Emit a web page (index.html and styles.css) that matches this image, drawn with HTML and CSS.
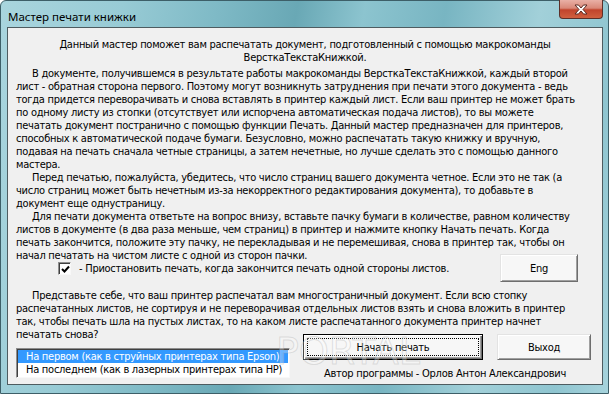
FILE: index.html
```html
<!DOCTYPE html>
<html lang="ru">
<head>
	<meta charset="UTF-8">
	<title>Мастер печати книжки</title>
	<link rel="stylesheet" href="styles.css">
</head>
<body>
	<div class="window">
		<div class="titlebar">
			<span class="title">Мастер печати книжки</span>
			<div class="close_btn">
				<svg width="16" height="11" viewBox="0 0 16 11">
					<path d="M2 1h3.5L8 4l2.5-3H14l-4 4.5L14 10h-3.5L8 7l-2.5 3H2l4-4.5z" fill="#fff" stroke="#5a2a22" stroke-width="1" stroke-linejoin="round"/>
				</svg>
			</div>
		</div>

		<div class="client">
			<p class="intro">Данный мастер поможет вам распечатать документ, подготовленный с помощью макрокоманды<br>ВерсткаТекстаКнижкой.</p>

			<p class="text">В документе, получившемся в результате работы макрокоманды ВерсткаТекстаКнижкой, каждый второй<br>лист - обратная сторона первого. Поэтому могут возникнуть затруднения при печати этого документа - ведь<br>тогда придется переворачивать и снова вставлять в принтер каждый лист. Если ваш принтер не может брать<br>по одному листу из стопки (отсутствует или испорчена автоматическая подача листов), то вы можете<br>печатать документ постранично с помощью функции Печать. Данный мастер предназначен для принтеров,<br>способных к автоматической подаче бумаги. Безусловно, можно распечатать такую книжку и вручную,<br>подавая на печать сначала четные страницы, а затем нечетные, но лучше сделать это с помощью данного<br>мастера.</p>

			<p class="text">Перед печатью, пожалуйста, убедитесь, что число страниц вашего документа четное. Если это не так (а<br>число страниц может быть нечетным из-за некорректного редактирования документа), то добавьте в<br>документ еще однустраницу.</p>

			<p class="text">Для печати документа ответьте на вопрос внизу, вставьте пачку бумаги в количестве, равном количеству<br>листов в документе (в два раза меньше, чем страниц) в принтер и нажмите кнопку Начать печать. Когда<br>печать закончится, положите эту пачку, не перекладывая и не перемешивая, снова в принтер так, чтобы он<br>начал печатать на чистом листе с одной из сторон пачки.</p>

			<div class="check_row">
				<span class="checkbox">
					<svg width="9" height="9" viewBox="0 0 9 9">
						<path d="M1 4l2.5 2.5L8 1.5" fill="none" stroke="#000" stroke-width="2"/>
					</svg>
				</span>
				<span class="check_label">- Приостановить печать, когда закончится печать одной стороны листов.</span>
				<div class="btn btn_eng">Eng</div>
			</div>

			<p class="text question">Представьте себе, что ваш принтер распечатал вам многостраничный документ. Если всю стопку<br>распечатанных листов, не сортируя и не переворачивая отдельных листов взять и снова вложить в принтер<br>так, чтобы печать шла на пустых листах, то на каком листе распечатанного документа принтер начнет<br>печатать снова?</p>

			<div class="bottom">
				<ul class="listbox">
					<li class="selected">На первом (как в струйных принтерах типа Epson)</li>
					<li>На последнем (как в лазерных принтерах типа HP)</li>
				</ul>
				<div class="actions">
					<div class="btn_row">
						<div class="btn btn_default"><span>Начать печать</span></div>
						<div class="btn btn_exit">Выход</div>
					</div>
					<div class="author">Автор программы - Орлов Антон Александрович</div>
				</div>
			</div>

			<div class="watermark">PORTAL</div>
		</div>
	</div>
</body>
</html>
```

FILE: styles.css
```css
*{
	margin:0;
	padding:0;
}

body{
	width:609px;
	height:394px;
	overflow:hidden;
	font-family:"DejaVu Sans Condensed","DejaVu Sans",sans-serif;
	font-size:11px;
	letter-spacing:-0.26px;
	color:#000;
}

.window{
	width:609px;
	height:394px;
	box-sizing:border-box;
	border:1px solid #3d5f68;
	border-radius:6px 6px 0 0;
	background:linear-gradient(100deg,#a9d5de 0%,#98cbd5 18%,#7fbac6 32%,#69a8b5 44%,#8cc4cf 54%,#78b5c2 66%,#a2d0d9 80%,#8fc5d0 92%,#a6d3dc 100%);
}

.titlebar{
	height:26px;
	display:flex;
	justify-content:space-between;
	align-items:flex-start;
}

.title{
	font-family:"Noto Sans",sans-serif;
	font-size:11.5px;
	letter-spacing:0;
	margin:8px 0 0 7px;
	color:#000;
}

.close_btn{
	width:42px;
	height:18px;
	margin-top:-1px;
	margin-right:5px;
	border:1px solid #5c3029;
	border-top:none;
	border-radius:0 0 4px 4px;
	background:linear-gradient(#e9b0a6 0%,#d98878 45%,#c1442c 55%,#d0603f 100%);
	display:flex;
	justify-content:center;
	align-items:center;
}

.client{
	position:relative;
	height:358px;
	margin:0 5px 0 6px;
	box-sizing:border-box;
	border:1px solid #4e5c60;
	background:#f0f0f0;
	padding:10px 8px 0 8px;
	line-height:13px;
}

.intro{
	text-align:center;
	white-space:nowrap;
}

.text{
	text-indent:16px;
	white-space:nowrap;
}

.intro + .text{
	margin-top:3px;
}

.check_row{
	display:flex;
	align-items:flex-start;
	padding-left:42px;
}

.checkbox{
	width:13px;
	height:13px;
	box-sizing:border-box;
	background:#fff;
	border:1px solid;
	border-color:#8e8e8e #f8f8f8 #f8f8f8 #8e8e8e;
	box-shadow:inset 1px 1px #3f3f3f;
	display:flex;
	justify-content:center;
	align-items:center;
	padding:1px 0 0 1px;
}

.check_label{
	margin-left:8px;
	flex:1;
}

.btn{
	box-sizing:border-box;
	background:#f7f7f7;
	border:1px solid;
	border-color:#e3e3e3 #6e6e6e #6e6e6e #e3e3e3;
	box-shadow:inset 1px 1px #fff,inset -1px -1px #a0a0a0;
	display:flex;
	justify-content:center;
	align-items:center;
}

.btn_eng{
	width:78px;
	height:28px;
	margin:-8px 16px 0 0;
}

.question{
	margin-top:7px;
}

.bottom{
	display:flex;
	margin-top:-7px;
}

.listbox{
	list-style:none;
	width:274px;
	height:30px;
	box-sizing:border-box;
	margin-top:14px;
	background:#fff;
	border:1px solid;
	border-color:#8e8e8e #f8f8f8 #f8f8f8 #8e8e8e;
	box-shadow:inset 1px 1px #404040;
	padding:1px 1px 0 1px;
}

.listbox li{
	height:13px;
	padding-left:8px;
	white-space:nowrap;
}

.listbox .selected{
	background:#3399ff;
	color:#fff;
}

.actions{
	margin-left:13px;
	width:288px;
}

.btn_row{
	display:flex;
	gap:14px;
}

.btn_default{
	width:180px;
	height:26px;
	border:1px solid #000;
	box-shadow:inset 1px 1px #fff,inset -1px -1px #6e6e6e,inset -2px -2px #a0a0a0;
	position:relative;
}

.btn_default:after{
	content:"";
	position:absolute;
	left:3px;
	top:3px;
	right:3px;
	bottom:3px;
	border:1px dotted #000;
}

.btn_exit{
	width:94px;
	height:26px;
}

.author{
	margin-top:7px;
	text-align:center;
	padding-right:4px;
}

.watermark{
	position:absolute;
	left:268px;
	top:303px;
	font-family:"DejaVu Sans",sans-serif;
	font-size:38px;
	line-height:40px;
	letter-spacing:0;
	color:rgba(255,255,255,0.3);
	-webkit-text-stroke:1px rgba(160,160,160,0.3);
	pointer-events:none;
}
```
